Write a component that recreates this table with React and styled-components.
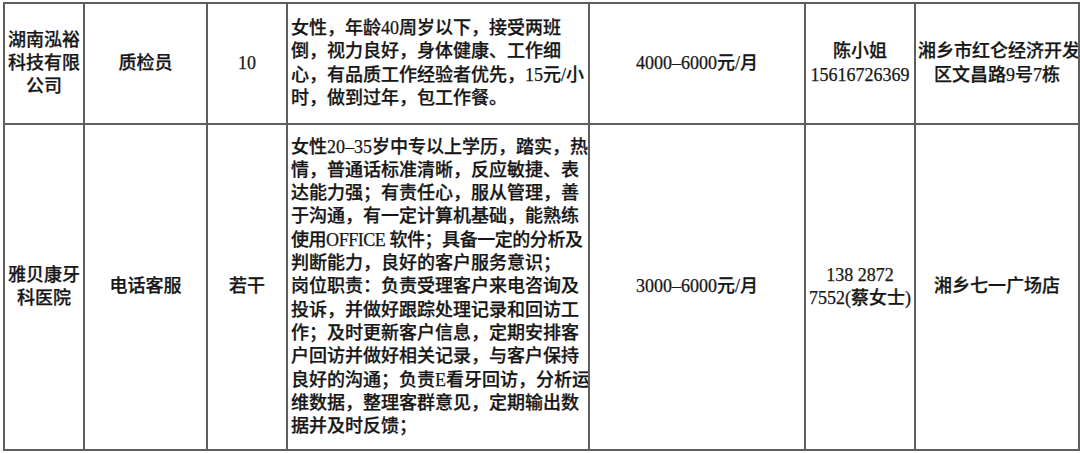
import React from "react";
import styled, { createGlobalStyle } from "styled-components";

const Global = createGlobalStyle`
  html, body { margin: 0; padding: 0; background: #ffffff; }
  body { font-family: "Liberation Serif", "Noto Sans CJK SC", serif; color: #161616; }
`;

const Page = styled.div`
  padding: 2px 0 0 3px;
  width: 1080px;
  height: 453px;
  box-sizing: border-box;
  overflow: hidden;
`;

const Table = styled.table`
  border-collapse: collapse;
  table-layout: fixed;
  width: 1075px;
`;

const Row = styled.tr`
  height: ${(p) => p.$h}px;
`;

const Cell = styled.td`
  border: 2px solid #5e5e5e;
  padding: ${(p) => (p.$left ? "0 0 0 3px" : "0 2px")};
  text-align: ${(p) => (p.$left ? "left" : "center")};
  vertical-align: middle;
  font-size: 18px;
  line-height: 23.3px;
  font-weight: 500;
  -webkit-text-stroke: 0.25px #161616;
  white-space: nowrap;
  overflow: hidden;
`;

const Line = styled.span`
  display: block;
  letter-spacing: ${(p) => (p.$tight ? "-0.45px" : "normal")};
`;

const cols = [80, 123, 80, 302, 216, 110, 164];

const rows = [
  {
    h: 121,
    company: ["湖南泓裕", "科技有限", "公司"],
    job: "质检员",
    count: "10",
    desc: [
      "女性，年龄40周岁以下，接受两班",
      "倒，视力良好，身体健康、工作细",
      "心，有品质工作经验者优先，15元/小",
      "时，做到过年，包工作餐。",
    ],
    salary: "4000–6000元/月",
    contact: ["陈小姐", "15616726369"],
    address: ["湘乡市红仑经济开发", "区文昌路9号7栋"],
  },
  {
    h: 326,
    company: ["雅贝康牙", "科医院"],
    job: "电话客服",
    count: "若干",
    desc: [
      "女性20–35岁中专以上学历，踏实，热",
      "情，普通话标准清晰，反应敏捷、表",
      "达能力强；有责任心，服从管理，善",
      "于沟通，有一定计算机基础，能熟练",
      "使用OFFICE 软件；具备一定的分析及",
      "判断能力，良好的客户服务意识；",
      "岗位职责：负责受理客户来电咨询及",
      "投诉，并做好跟踪处理记录和回访工",
      "作；及时更新客户信息，定期安排客",
      "户回访并做好相关记录，与客户保持",
      "良好的沟通；负责E看牙回访，分析运",
      "维数据，整理客群意见，定期输出数",
      "据并及时反馈；",
    ],
    salary: "3000–6000元/月",
    contact: ["138 2872", "7552(蔡女士)"],
    address: ["湘乡七一广场店"],
  },
];

const Lines = ({ items }) =>
  items.map((t, i) => (
    <Line key={i} $tight={t.length > 19}>
      {t}
    </Line>
  ));

export default function App() {
  return (
    <Page>
      <Global />
      <Table>
        <colgroup>
          {cols.map((w, i) => (
            <col key={i} style={{ width: w }} />
          ))}
        </colgroup>
        <tbody>
          {rows.map((r, i) => (
            <Row key={i} $h={r.h}>
              <Cell><Lines items={r.company} /></Cell>
              <Cell>{r.job}</Cell>
              <Cell>{r.count}</Cell>
              <Cell $left><Lines items={r.desc} /></Cell>
              <Cell>{r.salary}</Cell>
              <Cell><Lines items={r.contact} /></Cell>
              <Cell><Lines items={r.address} /></Cell>
            </Row>
          ))}
        </tbody>
      </Table>
    </Page>
  );
}
